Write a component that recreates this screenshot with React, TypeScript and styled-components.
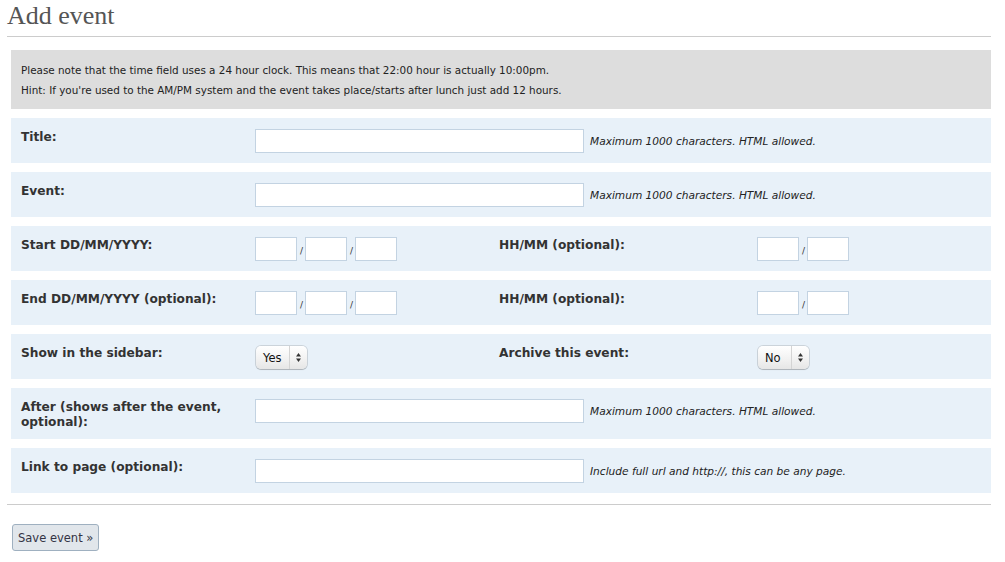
import React, { FC } from 'react';
import styled, { createGlobalStyle } from 'styled-components';

const GlobalStyle = createGlobalStyle`
  body {
    margin: 0;
    background: #fff;
    font-family: "DejaVu Sans", Verdana, sans-serif;
    color: #333;
  }
`;

const Page = styled.div`
  padding: 0 14px 0 7px;
`;

const Heading = styled.h1`
  margin: 0;
  padding: 2px 0 6px;
  font-family: "Liberation Serif", Georgia, serif;
  font-weight: normal;
  font-size: 26px;
  line-height: 28px;
  color: #555;
  border-bottom: 1px solid #ccc;
`;

const Form = styled.div`
  padding: 13px 0 0 4px;
  display: flex;
  flex-direction: column;
  gap: 9px;
`;

const Notice = styled.div`
  background: #dddddd;
  padding: 10px 10px 9px;
  font-size: 10.4px;
  line-height: 20px;
  color: #222;
`;

const Row = styled.div`
  background: #e8f1f9;
  display: grid;
  grid-template-columns: 234px 244px 258px 1fr;
  align-items: start;
  padding: 11px 0 10px;
  min-height: 24px;
`;

const Label = styled.div<{ $col?: number }>`
  grid-column: ${p => p.$col ?? 1};
  padding: 1px 10px 0;
  margin-bottom: -1px;
  font-weight: bold;
  font-size: 12.2px;
  line-height: 15px;
  color: #333;
`;

const Field = styled.div<{ $col?: number; $span?: boolean }>`
  grid-column: ${p => (p.$span ? '2 / 5' : p.$col ?? 2)};
  padding: 0 10px;
  display: flex;
  align-items: center;
  gap: 6px;
`;

const TextInput = styled.input<{ $w: number }>`
  box-sizing: border-box;
  width: ${p => p.$w}px;
  height: 24px;
  margin: 0;
  border: 1px solid #c3d3e2;
  background: #fff;
  padding: 2px 4px;
  font: 12px "DejaVu Sans", sans-serif;
`;

const Slash = styled.span`
  font-size: 9px;
  color: #333;
  width: 2px;
  padding-top: 4px;
`;

const DateGroup = styled.div`
  display: flex;
  align-items: center;
  gap: 3px;
`;

const Hint = styled.span`
  font-style: italic;
  font-size: 10.6px;
  color: #222;
`;

const SelectBox = styled.div<{ $w: number }>`
  margin: 1px 0 0 1px;
  width: ${p => p.$w}px;
  height: 23px;
  box-sizing: border-box;
  display: flex;
  align-items: stretch;
  border-radius: 5px;
  background: linear-gradient(#ffffff, #f1f1f1 60%, #e6e6e6);
  box-shadow: 0 0 0 1px rgba(0, 0, 0, 0.12), 0 1px 1px rgba(0, 0, 0, 0.15);
  font-size: 11.5px;
  color: #111;
`;

const SelectValue = styled.span`
  flex: 1;
  display: flex;
  align-items: center;
  padding-left: 7px;
  border-right: 1px solid #d4d4d4;
`;

const SelectArrows = styled.span`
  width: 17px;
  display: flex;
  align-items: center;
  justify-content: center;
`;

const Divider = styled.hr`
  margin: 11px 0 0;
  border: 0;
  border-top: 1px solid #ccc;
`;

const Actions = styled.div`
  padding: 19px 0 0 5px;
`;

const Button = styled.button`
  height: 27px;
  padding: 0 5px;
  border: 1px solid #9fb0c0;
  border-radius: 3px;
  background: #e1e6eb;
  font: 11.5px "DejaVu Sans", sans-serif;
  color: #334;
`;

const Arrows: FC = () => (
  <svg width="7" height="11" viewBox="0 0 7 11">
    <path d="M3.5 1 L6 4.5 H1 Z" fill="#333" />
    <path d="M3.5 10 L6 6.5 H1 Z" fill="#333" />
  </svg>
);

const Select: FC<{ value: string; w: number }> = ({ value, w }) => (
  <SelectBox $w={w}>
    <SelectValue>{value}</SelectValue>
    <SelectArrows>
      <Arrows />
    </SelectArrows>
  </SelectBox>
);

const Small: FC = () => <TextInput $w={42} />;

const MAX = 'Maximum 1000 characters. HTML allowed.';

const App: FC = () => (
  <Page>
    <GlobalStyle />
    <Heading>Add event</Heading>
    <Form>
      <Notice>
        Please note that the time field uses a 24 hour clock. This means that 22:00 hour is actually 10:00pm.
        <br />
        Hint: If you're used to the AM/PM system and the event takes place/starts after lunch just add 12 hours.
      </Notice>
      <Row>
        <Label>Title:</Label>
        <Field $span>
          <TextInput $w={329} />
          <Hint>{MAX}</Hint>
        </Field>
      </Row>
      <Row>
        <Label>Event:</Label>
        <Field $span>
          <TextInput $w={329} />
          <Hint>{MAX}</Hint>
        </Field>
      </Row>
      <Row>
        <Label>Start DD/MM/YYYY:</Label>
        <Field>
          <DateGroup>
            <Small /><Slash>/</Slash><Small /><Slash>/</Slash><Small />
          </DateGroup>
        </Field>
        <Label $col={3}>HH/MM (optional):</Label>
        <Field $col={4}>
          <DateGroup>
            <Small /><Slash>/</Slash><Small />
          </DateGroup>
        </Field>
      </Row>
      <Row>
        <Label>End DD/MM/YYYY (optional):</Label>
        <Field>
          <DateGroup>
            <Small /><Slash>/</Slash><Small /><Slash>/</Slash><Small />
          </DateGroup>
        </Field>
        <Label $col={3}>HH/MM (optional):</Label>
        <Field $col={4}>
          <DateGroup>
            <Small /><Slash>/</Slash><Small />
          </DateGroup>
        </Field>
      </Row>
      <Row>
        <Label>Show in the sidebar:</Label>
        <Field>
          <Select value="Yes" w={51} />
        </Field>
        <Label $col={3}>Archive this event:</Label>
        <Field $col={4}>
          <Select value="No" w={51} />
        </Field>
      </Row>
      <Row>
        <Label>
          After (shows after the event,
          <br />
          optional):
        </Label>
        <Field $span>
          <TextInput $w={329} />
          <Hint>{MAX}</Hint>
        </Field>
      </Row>
      <Row>
        <Label>Link to page (optional):</Label>
        <Field $span>
          <TextInput $w={329} />
          <Hint>Include full url and http://, this can be any page.</Hint>
        </Field>
      </Row>
    </Form>
    <Divider />
    <Actions>
      <Button>Save event »</Button>
    </Actions>
  </Page>
);

export default App;
